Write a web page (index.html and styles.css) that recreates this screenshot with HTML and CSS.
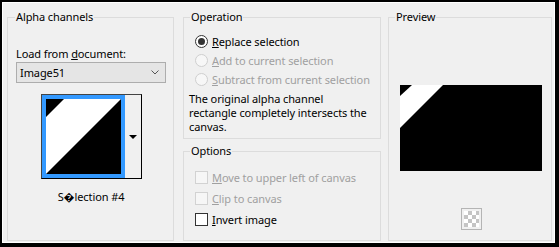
FILE: index.html
```html
<!DOCTYPE html>
<html lang="en">
<head>
  <meta charset="UTF-8">
  <title>Load Selection From Alpha Channel</title>
  <link rel="stylesheet" href="styles.css">
</head>
<body>
  <div class="dialog">
    <div class="panes">

      <fieldset class="group alpha">
        <legend>Alpha channels</legend>
        <div class="inner">
          <div class="field-label">Load from <u>d</u>ocument:</div>
          <div class="select">
            <span>Image51</span>
            <svg class="chevron" width="8" height="5" viewBox="0 0 8 5"><polyline points="0.5,0.5 4,4 7.5,0.5" fill="none" stroke="#555" stroke-width="1"/></svg>
          </div>
          <div class="thumb-picker">
            <div class="thumb">
              <svg width="75" height="75" viewBox="0 0 75 75">
                <rect width="75" height="75" fill="#fff"/>
                <polygon points="0,0 18,0 0,18" fill="#000"/>
                <polygon points="75,0 75,75 0,75" fill="#000"/>
              </svg>
            </div>
            <div class="thumb-btn"><span class="tri"></span></div>
          </div>
          <div class="caption">S&#xFFFD;lection #4</div>
        </div>
      </fieldset>

      <div class="middle">
        <fieldset class="group operation">
          <legend>Operation</legend>
          <div class="inner">
            <div class="choices">
              <div class="row"><span class="radio checked"></span><span><u>R</u>eplace selection</span></div>
              <div class="row off"><span class="radio"></span><span><u>A</u>dd to current selection</span></div>
              <div class="row off"><span class="radio"></span><span><u>S</u>ubtract from current selection</span></div>
            </div>
            <p class="note">The original alpha channel<br>rectangle completely intersects the<br>canvas.</p>
          </div>
        </fieldset>

        <fieldset class="group options">
          <legend>Options</legend>
          <div class="inner">
            <div class="choices">
              <div class="row tall off"><span class="check"></span><span><u>M</u>ove to upper left of canvas</span></div>
              <div class="row tall off"><span class="check"></span><span><u>C</u>lip to canvas</span></div>
              <div class="row tall"><span class="check"></span><span><u>I</u>nvert image</span></div>
            </div>
          </div>
        </fieldset>
      </div>

      <fieldset class="group preview">
        <legend>Preview</legend>
        <div class="inner">
          <svg class="preview-img" width="142" height="86" viewBox="0 0 142 86">
            <rect width="142" height="86" fill="#000"/>
            <polygon points="12,0 43,0 0,43 0,11" fill="#fff"/>
          </svg>
          <div class="checker"><span></span></div>
        </div>
      </fieldset>

    </div>
  </div>
</body>
</html>
```

FILE: styles.css
```css
html, body {
  margin: 0;
  padding: 0;
  background: #f0f0f0;
}
body {
  font-family: "Noto Sans", "Open Sans", sans-serif;
  font-size: 11px;
  letter-spacing: -0.1px;
  color: #000;
}
u {
  text-underline-offset: 1px;
}
.dialog {
  width: 559px;
  height: 247px;
  box-sizing: border-box;
  border-style: solid;
  border-color: #000;
  border-width: 2px 4px 4px 2px;
  background: #f0f0f0;
}
.panes {
  height: 100%;
  box-sizing: border-box;
  border: 1px solid #fff;
  display: flex;
  padding: 7px 2px 1px 4px;
}

/* group boxes */
.group {
  margin: 0;
  padding: 0;
  min-width: 0;
  box-sizing: border-box;
  border: 1px solid #dcdcdc;
}
.group legend {
  margin-left: 6px;
  padding: 0 1px;
  line-height: 14px;
}
.alpha legend {
  margin-left: 7px;
}
.alpha {
  width: 167px;
  flex: none;
}
.middle {
  width: 198px;
  flex: none;
  margin-left: 9px;
  display: flex;
  flex-direction: column;
}
.preview {
  width: 164px;
  flex: none;
  margin-left: 7px;
}

/* alpha channels */
.alpha .inner {
  padding: 0 7px 0 8px;
}
.field-label {
  margin-top: 22px;
  line-height: 15px;
}
.select {
  margin-top: 1px;
  height: 21px;
  box-sizing: border-box;
  border: 1px solid #adadad;
  background: #e5e5e5;
  display: flex;
  align-items: center;
  justify-content: space-between;
  padding: 0 6px 0 3px;
}
.chevron {
  display: block;
}
.thumb-picker {
  margin: 11px auto 0;
  width: 101px;
  box-sizing: border-box;
  display: flex;
  border: 1px solid #000;
  border-top-color: #444;
  border-left-color: #444;
}
.thumb {
  border: 4px solid #3399ff;
  width: 75px;
  height: 75px;
}
.thumb svg {
  display: block;
}
.thumb-btn {
  flex: 1;
  display: flex;
  align-items: center;
  justify-content: center;
  padding-left: 1px;
}
.tri {
  width: 0;
  height: 0;
  border-left: 4px solid transparent;
  border-right: 4px solid transparent;
  border-top: 4px solid #000;
}
.caption {
  margin-top: 10px;
  line-height: 15px;
  text-align: center;
}

/* operation + options */
.operation .inner {
  padding: 8px 5px 4px 5px;
}
.options {
  flex: 1;
  margin-top: 5px;
}
.options .inner {
  padding: 9px 5px 0 5px;
}
.choices {
  margin-left: 6px;
}
.row {
  height: 19px;
  display: flex;
  align-items: center;
  gap: 4px;
}
.row.tall {
  height: 21px;
}
.row.off {
  color: #a0a0a0;
}
.radio {
  width: 13px;
  height: 13px;
  box-sizing: border-box;
  border-radius: 50%;
  border: 1px solid #333;
  background: #fff;
  display: flex;
  align-items: center;
  justify-content: center;
}
.radio.checked::after {
  content: "";
  width: 7px;
  height: 7px;
  border-radius: 50%;
  background: #333;
}
.row.off .radio {
  border-color: #cfcfcf;
  background: #f7f7f7;
}
.check {
  width: 13px;
  height: 13px;
  box-sizing: border-box;
  border: 1px solid #333;
  background: #fff;
}
.row.off .check {
  border-color: #d2d2d2;
  background: #f6f6f6;
}
.note {
  margin: 3px 0 0;
  line-height: 14px;
}

/* preview */
.preview .inner {
  display: flex;
  flex-direction: column;
  align-items: center;
  padding-left: 2px;
}
.preview-img {
  display: block;
  margin-top: 61px;
}
.checker {
  margin-top: 37px;
  width: 21px;
  height: 22px;
  box-sizing: border-box;
  border: 1px solid #b4b4b4;
  padding: 2px;
}
.checker span {
  display: block;
  width: 100%;
  height: 100%;
  background: repeating-conic-gradient(#c4c4c4 0 25%, #fff 0 50%) 0 0 / 8px 8px;
}
```
